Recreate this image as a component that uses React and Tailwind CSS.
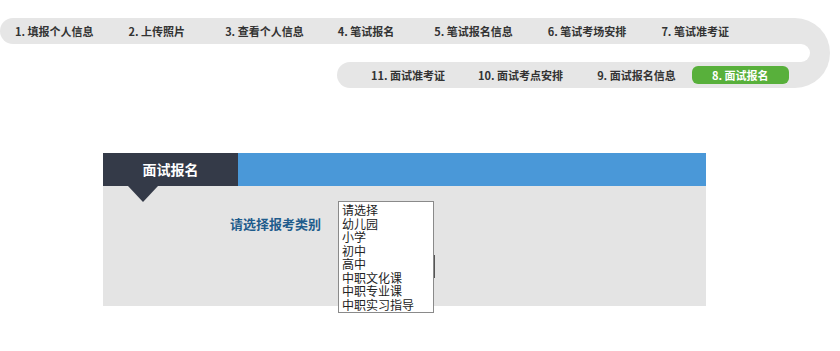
const topSteps = [
  { label: "1. 填报个人信息", ml: "ml-[15px]" },
  { label: "2. 上传照片", ml: "ml-[35px]" },
  { label: "3. 查看个人信息", ml: "ml-[40px]" },
  { label: "4. 笔试报名", ml: "ml-[34px]" },
  { label: "5. 笔试报名信息", ml: "ml-[40px]" },
  { label: "6. 笔试考场安排", ml: "ml-[35px]" },
  { label: "7. 笔试准考证", ml: "ml-[35px]" },
];

const bottomSteps = [
  { label: "11. 面试准考证", ml: "ml-[34px]" },
  { label: "10. 面试考点安排", ml: "ml-[33px]" },
  { label: "9. 面试报名信息", ml: "ml-[34px]" },
];

const options = ["请选择", "幼儿园", "小学", "初中", "高中", "中职文化课", "中职专业课", "中职实习指导"];

function StepTrack() {
  return (
    <div className="flex w-[830px] pt-[18px]">
      <div className="flex w-[790px] flex-col">
        <div className="flex h-[26px] items-center rounded-l-[13px] bg-[#e6e6e6]">
          {topSteps.map((s) => (
            <span key={s.label} className={`${s.ml} shrink-0 whitespace-nowrap text-[11px] font-bold text-[#333]`}>
              {s.label}
            </span>
          ))}
        </div>
        <div className="h-[18px]" />
        <div className="ml-[337px] flex h-[26px] items-center rounded-l-[13px] bg-[#e6e6e6]">
          {bottomSteps.map((s) => (
            <span key={s.label} className={`${s.ml} shrink-0 whitespace-nowrap text-[11px] font-bold text-[#333]`}>
              {s.label}
            </span>
          ))}
          <span className="ml-[16px] flex h-[18px] w-[97px] shrink-0 items-center justify-center rounded-[6px] bg-[#58b03b] text-[11px] font-bold text-white">
            8. 面试报名
          </span>
        </div>
      </div>
      <div className="h-[70px] w-[40px] rounded-r-[35px] bg-[#e6e6e6] pt-[26px]">
        <div className="h-[18px] w-[20px] rounded-r-[9px] bg-white" />
      </div>
    </div>
  );
}

export default function App() {
  return (
    <div className="h-[351px] w-[840px] bg-white" style={{ fontFamily: '"Noto Sans CJK SC", "Liberation Sans", sans-serif' }}>
      <StepTrack />

      <div className="ml-[103px] mt-[65px] w-[603px]">
        <div className="flex h-[33px]">
          <div className="relative flex w-[135px] items-center justify-center bg-[#343a48] text-[14px] font-bold text-white">
            面试报名
            <span className="absolute left-[25px] top-[33px] h-0 w-0 border-x-[15px] border-t-[16px] border-x-transparent border-t-[#343a48]" />
          </div>
          <div className="flex-1 bg-[#4a98d8]" />
        </div>

        <div className="flex h-[120px] bg-[#e4e4e4]">
          <div className="ml-[127px] mt-[30px] text-[13px] font-bold leading-[16px] text-[#1f5c8c]">请选择报考类别</div>
          <div className="relative ml-[17px] mt-[15px] h-[112px] w-[96px] border border-[#8a8a8a] bg-white pl-[3px] pt-px">
            {options.map((o) => (
              <div key={o} className="whitespace-nowrap text-[12px] leading-[13.5px] text-[#222]">
                {o}
              </div>
            ))}
            <span className="absolute right-[-2px] top-[53px] h-[23px] w-px bg-[#555]" />
          </div>
        </div>
      </div>
    </div>
  );
}
